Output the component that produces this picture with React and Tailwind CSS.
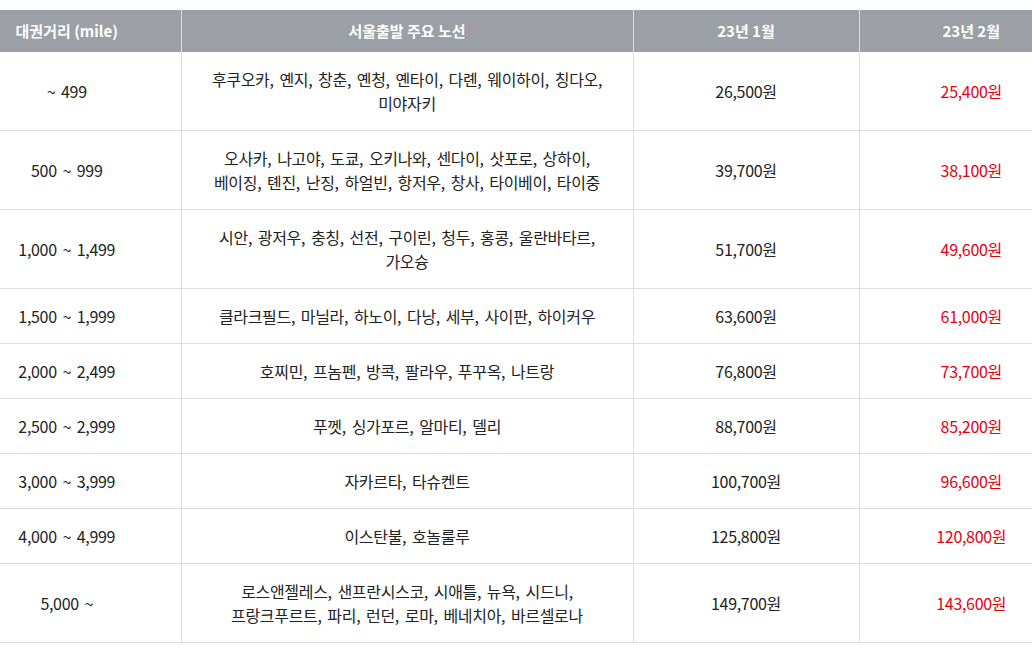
import React from "react";

const rows = [
  { range: "~ 499", cities: ["후쿠오카, 옌지, 창춘, 옌청, 옌타이, 다롄, 웨이하이, 칭다오,", "미야자키"], jan: "26,500원", feb: "25,400원" },
  { range: "500 ~ 999", cities: ["오사카, 나고야, 도쿄, 오키나와, 센다이, 삿포로, 상하이,", "베이징, 톈진, 난징, 하얼빈, 항저우, 창사, 타이베이, 타이중"], jan: "39,700원", feb: "38,100원" },
  { range: "1,000 ~ 1,499", cities: ["시안, 광저우, 충칭, 선전, 구이린, 청두, 홍콩, 울란바타르,", "가오슝"], jan: "51,700원", feb: "49,600원" },
  { range: "1,500 ~ 1,999", cities: ["클라크필드, 마닐라, 하노이, 다낭, 세부, 사이판, 하이커우"], jan: "63,600원", feb: "61,000원" },
  { range: "2,000 ~ 2,499", cities: ["호찌민, 프놈펜, 방콕, 팔라우, 푸꾸옥, 나트랑"], jan: "76,800원", feb: "73,700원" },
  { range: "2,500 ~ 2,999", cities: ["푸껫, 싱가포르, 알마티, 델리"], jan: "88,700원", feb: "85,200원" },
  { range: "3,000 ~ 3,999", cities: ["자카르타, 타슈켄트"], jan: "100,700원", feb: "96,600원" },
  { range: "4,000 ~ 4,999", cities: ["이스탄불, 호놀룰루"], jan: "125,800원", feb: "120,800원" },
  { range: "5,000 ~", cities: ["로스앤젤레스, 샌프란시스코, 시애틀, 뉴욕, 시드니,", "프랑크푸르트, 파리, 런던, 로마, 베네치아, 바르셀로나"], jan: "149,700원", feb: "143,600원" },
];

export default function App() {
  return (
    <div className="w-[1032px] h-[653px] bg-white overflow-hidden pt-[10px] font-['Noto_Sans_CJK_KR','Noto_Sans',sans-serif] text-[15px] text-[#222]">
      <table className="-ml-[47px] w-[1130px] border-collapse table-fixed">
        <colgroup>
          <col className="w-[228px]" />
          <col className="w-[452px]" />
          <col className="w-[226px]" />
          <col className="w-[224px]" />
        </colgroup>
        <thead>
          <tr className="bg-[#9c9fa5] text-white font-bold">
            <th className="h-[42px] leading-6 border-r border-[#dcdcdc] text-center">대권거리 (mile)</th>
            <th className="leading-6 border-r border-[#dcdcdc] text-center">서울출발 주요 노선</th>
            <th className="leading-6 border-r border-[#dcdcdc] text-center">23년 1월</th>
            <th className="leading-6 text-center">23년 2월</th>
          </tr>
        </thead>
        <tbody className="text-[16px] tracking-[-0.02em] [word-spacing:2.5px]">
          {rows.map((r) => (
            <tr key={r.range} className="border-b border-[#dcdcdc]">
              <td className="py-[15px] leading-6 text-center border-r border-[#dcdcdc]">{r.range}</td>
              <td className="py-[15px] leading-6 text-center border-r border-[#dcdcdc]">
                {r.cities.map((c, i) => (
                  <div key={i}>{c}</div>
                ))}
              </td>
              <td className="py-[15px] leading-6 text-center border-r border-[#dcdcdc]">{r.jan}</td>
              <td className="py-[15px] leading-6 text-center text-[#e60012]">{r.feb}</td>
            </tr>
          ))}
        </tbody>
      </table>
    </div>
  );
}
